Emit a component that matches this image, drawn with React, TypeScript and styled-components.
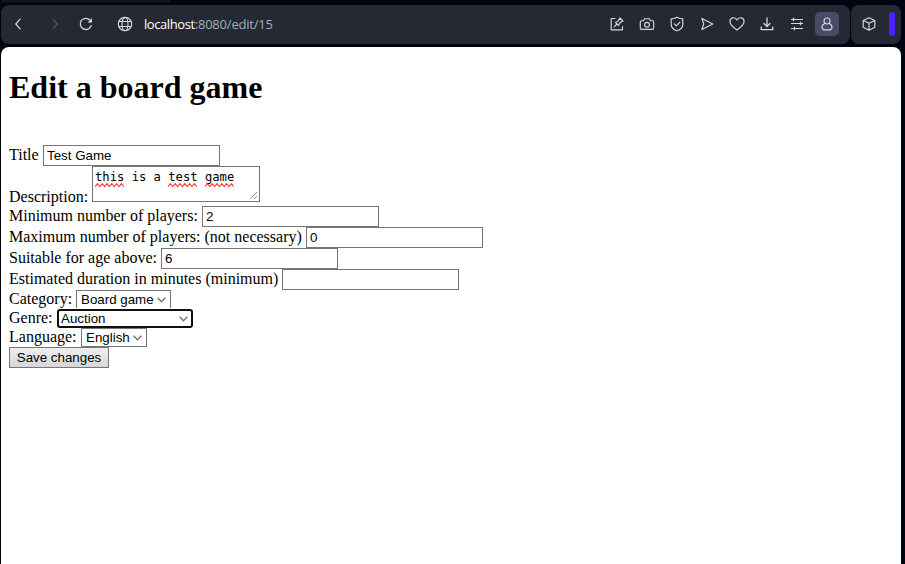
import React from 'react';
import styled, { createGlobalStyle } from 'styled-components';

const GlobalStyle = createGlobalStyle`
  * { box-sizing: border-box; }
  html, body { margin: 0; height: 100%; overflow: hidden; background: #020411; }
`;

const Browser = styled.div`
  display: flex;
  flex-direction: column;
  width: 905px;
  height: 564px;
  padding: 0 4px 0 1px;
  background: #020411;
`;

const TabStrip = styled.div`
  width: 170px;
  height: 3px;
  margin-bottom: 2px;
  background: linear-gradient(#171a27, #080b18);
  border-radius: 0 0 5px 0;
`;

const TopBar = styled.div`
  display: flex;
  flex: none;
  gap: 1px;
  height: 39px;
  margin-bottom: 3px;
`;

const Toolbar = styled.div`
  display: flex;
  align-items: center;
  width: 849px;
  padding: 0 11px 1px 7px;
  border-radius: 8px;
  background: #252934;
`;

const SidePanel = styled.div`
  display: flex;
  align-items: center;
  width: 50px;
  padding: 0 0 1px 8px;
  gap: 8px;
  border-radius: 8px;
  background: #252934;
`;

const Accent = styled.span`
  width: 6px;
  height: 24px;
  border-radius: 3px;
  background: #4d22ff;
`;

const Tool = styled.button<{ $active?: boolean; $dim?: boolean; $gap?: number }>`
  display: flex;
  align-items: center;
  justify-content: center;
  flex: none;
  width: 24px;
  height: 24px;
  margin: 0 0 0 ${p => p.$gap ?? 0}px;
  padding: 0;
  border: 0;
  border-radius: 5px;
  color: ${p => (p.$dim ? '#555965' : '#d6d8de')};
  background: ${p => (p.$active ? '#494b66' : 'transparent')};
`;

const Address = styled.div`
  flex: 1;
  margin-left: 7px;
  color: #a4adbc;
  font: 13px/20px "Open Sans", "Noto Sans", sans-serif;
  letter-spacing: -0.2px;
  white-space: nowrap;
`;

const Host = styled.span`
  color: #fff;
  letter-spacing: -0.42px;
`;

const Actions = styled.div`
  display: flex;
  gap: 6px;
`;

const Page = styled.main`
  flex: 1;
  padding: 22px 8px 0;
  border-radius: 8px 8px 0 0;
  background: #fff;
  color: #000;
  font: 16px/18px "Liberation Serif", serif;
`;

const Heading = styled.h1`
  margin: 0 0 39px;
  font-size: 32px;
  line-height: 37px;
  font-weight: 700;
  white-space: nowrap;
`;

const Row = styled.div<{ $h: number; $labelTop?: number; $w: number }>`
  display: grid;
  grid-template-columns: ${p => p.$w}px max-content;
  align-items: start;
  height: ${p => p.$h}px;
  & > label {
    padding-top: ${p => p.$labelTop ?? 1}px;
    white-space: nowrap;
  }
`;

const TextInput = styled.input`
  width: 177px;
  height: 21px;
  margin: 0;
  padding: 1px 3px;
  border: 1px solid #767676;
  border-radius: 0;
  outline: 0;
  background: #fff;
  color: #000;
  font: 13.333px "Liberation Sans", sans-serif;
`;

const TextArea = styled.div`
  position: relative;
  width: 168px;
  height: 36px;
  padding: 3px 2px;
  border: 1px solid #767676;
  font: 12.18px/15px "DejaVu Sans Mono", monospace;
  white-space: pre;
`;

const Resizer = styled.svg`
  position: absolute;
  right: 1px;
  bottom: 1px;
`;

const Misspelled = styled.span`
  position: relative;
`;

const Squiggle = styled.svg`
  position: absolute;
  left: 0;
  top: 12px;
  width: 100%;
  height: 6px;
`;

const SelectBox = styled.span<{ $w: number; $focused?: boolean }>`
  display: flex;
  align-items: center;
  justify-content: space-between;
  width: ${p => p.$w}px;
  height: 19px;
  padding: 0 4px;
  border: 1px solid #767676;
  background: #fff;
  font: 13.333px/17px "Liberation Sans", sans-serif;
  white-space: nowrap;
  ${p => p.$focused && `
    position: relative;
    padding: 0 3px 0 2px;
    border: 2px solid #101010;
    border-radius: 3px;
    box-shadow: 0 -1px #fff;
  `}
`;

const SaveButton = styled.button`
  display: block;
  width: 100px;
  height: 21px;
  padding: 0;
  border: 1px solid #767676;
  border-radius: 0;
  background: linear-gradient(#efefef, #d6d6d6);
  color: #000;
  font: 13.333px/17px "Liberation Sans", sans-serif;
  white-space: nowrap;
`;

const Glyph = ({ children }: { children: React.ReactNode }) => (
  <svg width="16" height="16" viewBox="0 0 16 16" fill="none" stroke="currentColor"
    strokeWidth="1.15" strokeLinecap="round" strokeLinejoin="round">{children}</svg>
);

const Word = ({ children }: { children: string }) => {
  const width = children.length * 7.333;
  let d = 'M0 4.6';
  for (let x = 2.4, high = true; x <= width + 1; x += 2.4, high = !high) d += ` L${x} ${high ? 1.6 : 4.6}`;
  return (
    <Misspelled>
      {children}
      <Squiggle><path d={d} fill="none" stroke="#ff3b3b" strokeWidth="1.1" /></Squiggle>
    </Misspelled>
  );
};

const Select = ({ value, width, focused }: { value: string; width: number; focused?: boolean }) => (
  <SelectBox $w={width} $focused={focused}>
    {value}
    <svg width="9" height="6" viewBox="0 0 9 6" fill="none" stroke="#767676" strokeWidth="1.4">
      <path d="M.6 .8 4.5 4.7 8.4 .8" />
    </svg>
  </SelectBox>
);

export default function App() {
  return (
    <Browser>
      <GlobalStyle />
      <TabStrip />
      <TopBar>
        <Toolbar>
          <Tool aria-label="Back" $gap={-2}><Glyph><path d="M10.1 3.2 5.8 8l4.3 4.8" /></Glyph></Tool>
          <Tool aria-label="Forward" $dim $gap={13}><Glyph><path d="M6 3.2 10.3 8 6 12.8" /></Glyph></Tool>
          <Tool aria-label="Reload" $gap={7}>
            <Glyph><path d="M13.2 9.6A5.6 5.6 0 1 1 12 4.1L13.4 5.5" strokeWidth="1.3" /><path d="M13.9 2v4.4H9.6Z" fill="currentColor" stroke="none" /></Glyph>
          </Tool>
          <Tool aria-label="Site" $gap={15}>
            <Glyph><circle cx="8" cy="8" r="6.7" /><ellipse cx="8" cy="8" rx="3" ry="6.7" /><path d="M2 5.5h12M2 10.5h12" /></Glyph>
          </Tool>
          <Address><Host>localhost</Host>:8080/edit/15</Address>
          <Actions>
            <Tool aria-label="Edit page">
              <Glyph><path d="M6 2.5H2.2v11.3h11.3V10.5M5.2 10.8 8 8M6.4 6.4l3.2 3.2.9-2.3 3.2-2.6-2.5-2.5-2.6 3.2ZM10.8 1.8l3.3 3.3" /></Glyph>
            </Tool>
            <Tool aria-label="Snapshot">
              <Glyph><path d="M2.5 4.7h2l1-2h5l1 2h2q1.2 0 1.2 1.2v6q0 1.4-1.4 1.4H2.7q-1.4 0-1.4-1.4v-6q0-1.2 1.2-1.2Z" /><circle cx="8" cy="8.8" r="2.4" /></Glyph>
            </Tool>
            <Tool aria-label="Protection">
              <Glyph><path d="M8 1.2Q5 2.9 2.2 2.9v5.5Q2.2 12.6 8 14.8q5.8-2.2 5.8-6.4V2.9Q11 2.9 8 1.2Z" /><path d="m5.4 7.8 2 2 3.5-3.6" /></Glyph>
            </Tool>
            <Tool aria-label="Send"><Glyph><path d="M2.8 2.4 13.8 8 2.8 13.6 4.8 8Z" /></Glyph></Tool>
            <Tool aria-label="Favourite">
              <Glyph><path d="M8 14C4.3 11.4.9 8.8.9 5.5.9 1.6 6 .3 8 4c2-3.7 7.1-2.4 7.1 1.5C15.1 8.8 11.7 11.4 8 14Z" /></Glyph>
            </Tool>
            <Tool aria-label="Downloads"><Glyph><path d="M8 2v8.2M5 7.5l3 3 3-3M2.2 11v2.7h11.6V11" strokeWidth="1.3" /></Glyph></Tool>
            <Tool aria-label="Settings"><Glyph><path d="M2 3.5h12M2 7.5h12M2 12.5h12M4.5 1.8v3.4M11.5 5.8v3.4M5.5 10.8v3.4" strokeLinecap="butt" strokeWidth="1.2" /></Glyph></Tool>
            <Tool aria-label="Profile" $active>
              <Glyph><circle cx="8" cy="5" r="3" /><path d="M5.5 7.5Q3 8.8 3 11.3q0 2.5 2.5 2.5h5q2.5 0 2.5-2.5 0-2.5-2.5-3.8" /></Glyph>
            </Tool>
          </Actions>
        </Toolbar>
        <SidePanel>
          <Tool aria-label="Extensions" $gap={-2}>
            <Glyph><path d="m8 1.8 5.8 2.8v6.7L8 14.3l-5.8-3V4.6ZM2.2 4.6 8 7.3l5.8-2.7M8 7.3v7" /></Glyph>
          </Tool>
          <Accent />
        </SidePanel>
      </TopBar>
      <Page>
        <Heading>Edit a board game</Heading>
        <Row $h={21} $w={34}><label>Title</label><TextInput defaultValue="Test Game" /></Row>
        <Row $h={40} $w={83} $labelTop={22}>
          <label>Description:</label>
          <TextArea>
            <Word>this</Word> is a <Word>test</Word> <Word>game</Word>
            <Resizer width="9" height="9" viewBox="0 0 9 9" stroke="#777" strokeWidth=".8"><path d="M1 8 8 1M5 8l3-3" /></Resizer>
          </TextArea>
        </Row>
        <Row $h={21} $w={193}><label>Minimum number of players:</label><TextInput defaultValue="2" /></Row>
        <Row $h={21} $w={297}><label>Maximum number of players: (not necessary)</label><TextInput defaultValue="0" /></Row>
        <Row $h={21} $w={152}><label>Suitable for age above:</label><TextInput defaultValue="6" /></Row>
        <Row $h={21} $w={273}><label>Estimated duration in minutes (minimum)</label><TextInput /></Row>
        <Row $h={19} $w={67} $labelTop={0}><label>Category:</label><Select value="Board game" width={95} /></Row>
        <Row $h={19} $w={48} $labelTop={0}><label>Genre:</label><Select value="Auction" width={136} focused /></Row>
        <Row $h={19} $w={72} $labelTop={0}><label>Language:</label><Select value="English" width={66} /></Row>
        <SaveButton>Save changes</SaveButton>
      </Page>
    </Browser>
  );
}
